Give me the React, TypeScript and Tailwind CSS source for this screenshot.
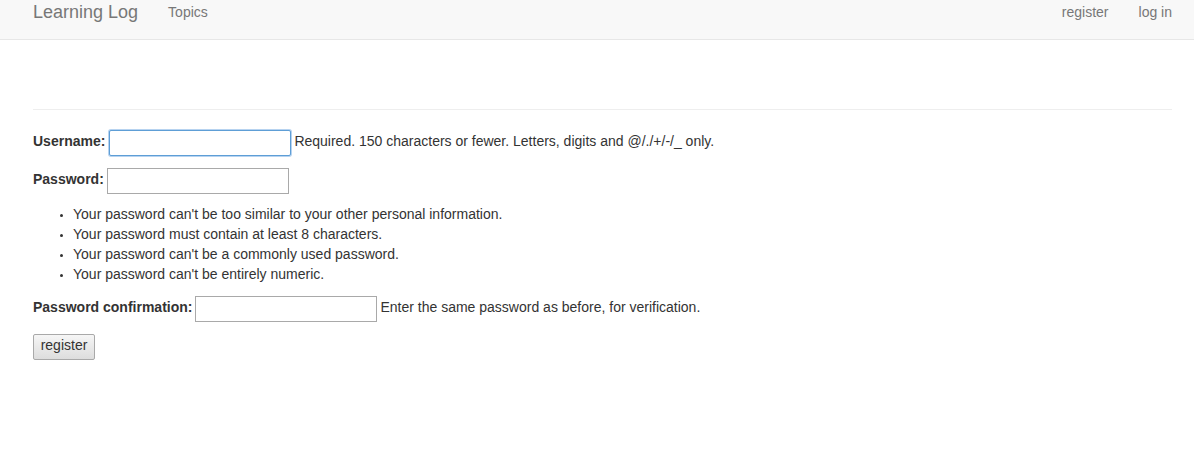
function Field({ label, focused, help }: { label: string; focused?: boolean; help?: string }) {
  return (
    <div className="flex items-center h-[26px]">
      <label className="font-bold mb-[4px]">{label}</label>
      <input
        type="text"
        className={
          "w-[182px] h-[26px] bg-white outline-none " +
          (focused
            ? "ml-[4px] border border-[#5e9ed6] rounded-[2px] shadow-[0_0_0_1px_#b7d3f0]"
            : "ml-[3px] border border-[#a9a9a9]")
        }
      />
      {help && <span className="ml-[3px] mb-[4px]">{help}</span>}
    </div>
  );
}

export default function App() {
  return (
    <div className="min-h-[462px] bg-white text-[#333] text-[14px] leading-[20px] font-['Liberation_Sans',Arial,sans-serif]">
      <nav className="h-[40px] bg-[#f8f8f8] border-b border-[#e7e7e7] flex items-start justify-between pl-[33px] pr-[22px] pt-[2px] text-[#777]">
        <div className="flex items-center">
          <a className="text-[18px] leading-[20px]">Learning Log</a>
          <a className="ml-[30px]">Topics</a>
        </div>
        <div className="flex items-center gap-[30px]">
          <a>register</a>
          <a>log in</a>
        </div>
      </nav>

      <div className="pl-[33px] pr-[22px]">
        <div className="h-[70px] border-b border-[#eee]" />

        <form className="mt-[20px]">
          <Field
            label="Username:"
            focused
            help="Required. 150 characters or fewer. Letters, digits and @/./+/-/_ only."
          />
          <div className="mt-[12px]">
            <Field label="Password:" />
          </div>
          <ul className="mt-[10px] pl-[40px] list-disc marker:text-[10px]">
            <li>Your password can't be too similar to your other personal information.</li>
            <li>Your password must contain at least 8 characters.</li>
            <li>Your password can't be a commonly used password.</li>
            <li>Your password can't be entirely numeric.</li>
          </ul>
          <div className="mt-[12px]">
            <Field label="Password confirmation:" help="Enter the same password as before, for verification." />
          </div>
          <button
            type="button"
            className="mt-[12px] h-[26px] w-[62px] pb-[4px] border border-[#a9a9a9] rounded-[2px] bg-gradient-to-b from-[#f6f6f6] to-[#dddddd] text-[#333] text-[14px] leading-[20px]"
          >
            register
          </button>
        </form>
      </div>
    </div>
  );
}
